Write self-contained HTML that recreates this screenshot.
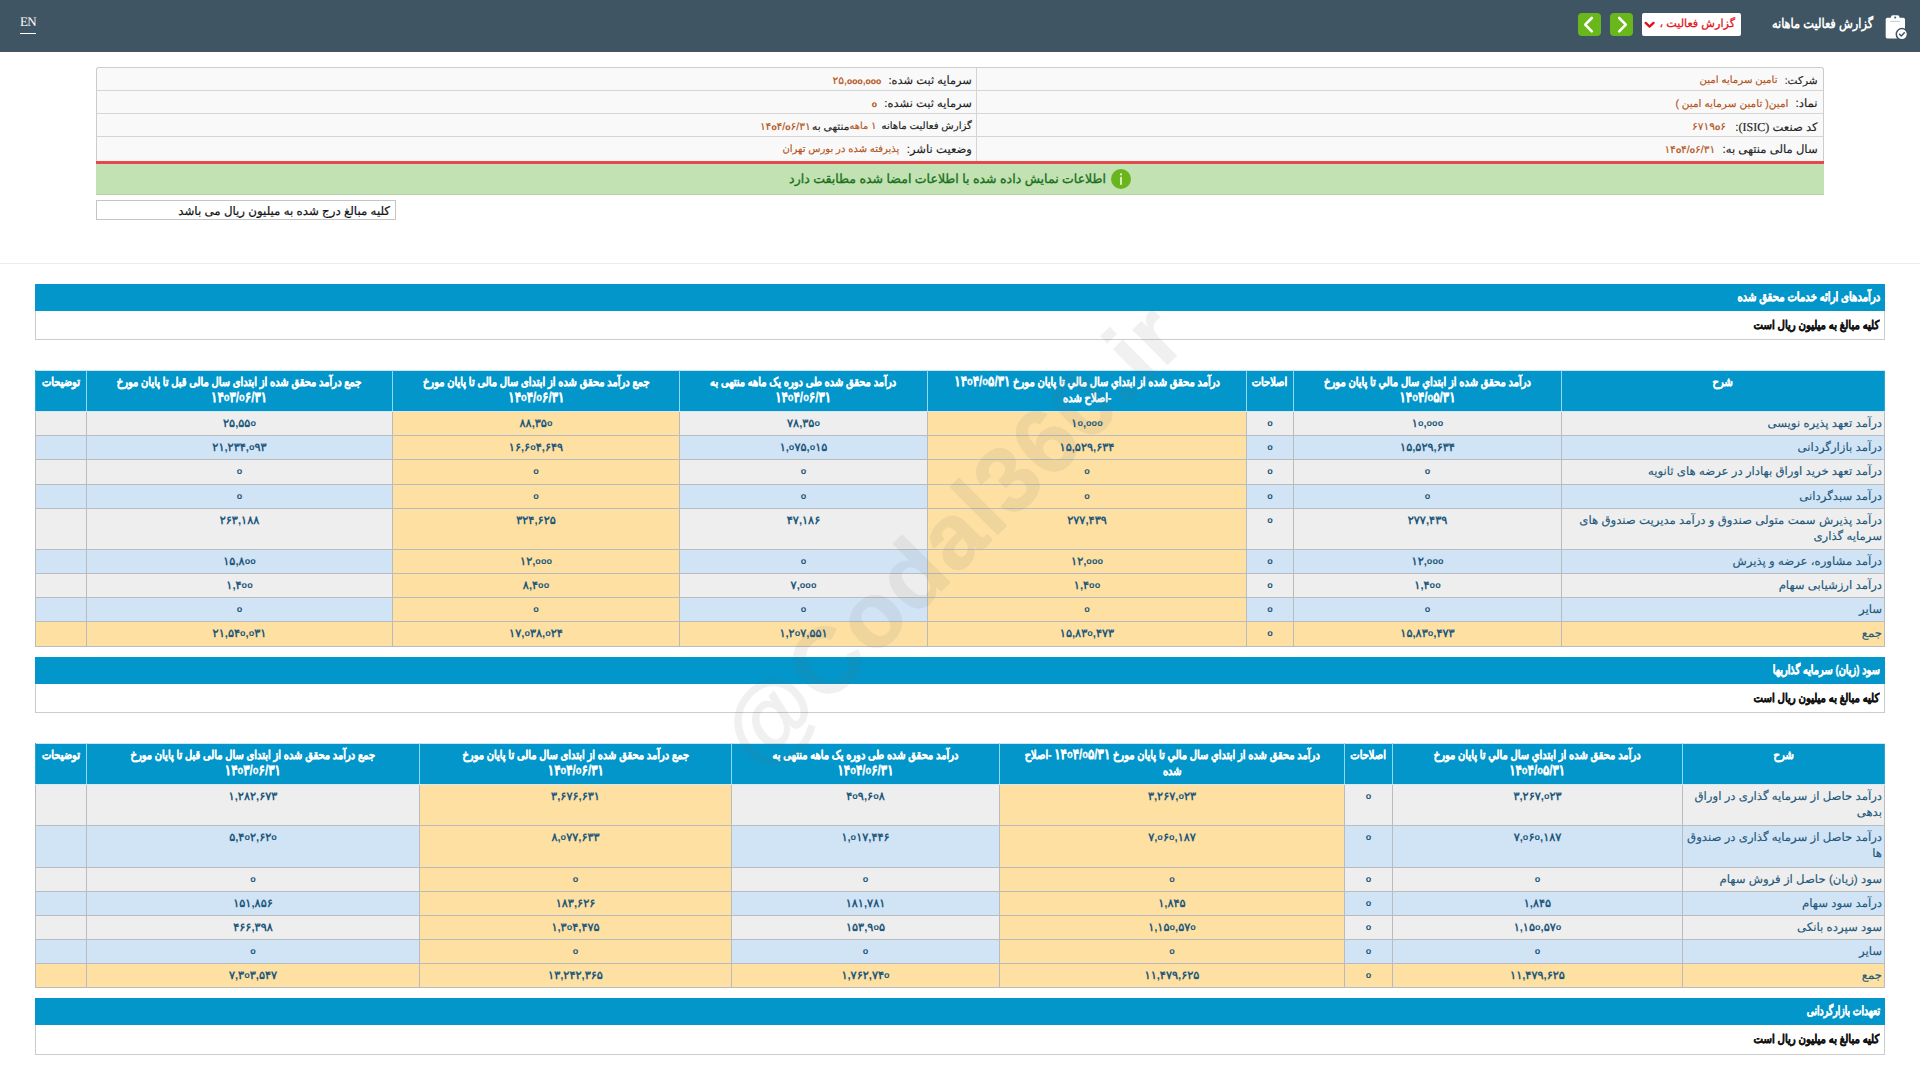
<!DOCTYPE html>
<html lang="fa" dir="rtl">
<head>
<meta charset="utf-8">
<title>گزارش فعالیت ماهانه</title>
<style>
*{box-sizing:border-box;margin:0;padding:0}
html,body{width:1920px;height:1080px;overflow:hidden;background:#fff}
body{font-family:"Liberation Sans",sans-serif;font-size:11px;color:#222;direction:rtl;position:relative;text-rendering:geometricPrecision}
.abs{position:absolute}
/* top bar */
#bar{left:0;top:0;width:1920px;height:52px;background:#3f5563}
#en{left:20px;top:14px;width:16px;height:20px;color:#fff;font-family:"Liberation Serif",serif;font-size:13px;letter-spacing:-0.6px;line-height:16px;border-bottom:1px solid #fff;direction:ltr;text-align:left;white-space:nowrap}
.gbtn{top:13px;width:23px;height:23px;border-radius:4px;background:#69b71b}
#sel{left:1642px;top:13px;width:99px;height:23px;border-radius:2px;background:#fff;color:#e3101a;-webkit-text-stroke:0.25px #e3101a;font-size:11.2px;line-height:22px;white-space:nowrap;text-align:right;padding-right:6px}
#title{left:1700px;width:173px;top:12px;height:24px;color:#fff;font-weight:bold;font-size:13.5px;line-height:24px;text-align:right;white-space:nowrap}
#title span{display:inline-block;transform:scaleX(0.843);transform-origin:100% 50%}
/* info box */
#info{left:96px;top:67px;width:1728px;height:94px;border:1px solid #ccc;border-bottom:none;border-radius:3px 3px 0 0;background:#f9f9f9}
.ir{position:absolute;left:0;width:1726px;height:1px;background:#d5d5d5}
#idiv{left:879px;top:0;width:1px;height:93px;background:#d5d5d5}
.it{position:absolute;height:22px;line-height:22px;font-size:11.3px;white-space:nowrap;text-align:right;color:#222;-webkit-text-stroke:0.15px}
.it b{font-weight:normal;color:#b4541a}
.it b .n{font-size:1.05em}
#red{left:96px;top:161px;width:1728px;height:3px;background:#e8484a}
#green{left:96px;top:164px;width:1728px;height:31px;background:#c2e2b4;border-bottom:1px solid #b5d5a8}
#gtxt{left:760px;width:346px;top:169px;height:20px;line-height:20px;font-size:12.5px;color:#1a701a;-webkit-text-stroke:0.35px #1a701a;text-align:right;white-space:nowrap}
#gico{left:1111px;top:169px;width:20px;height:20px;border-radius:50%;background:#6ab51e}
#note{left:96px;top:200px;width:300px;height:20px;border:1px solid #c4c4c4;background:#fff;font-size:11.8px;line-height:20px;-webkit-text-stroke:0.2px #111;color:#111;text-align:right;padding-right:5px;white-space:nowrap}
#hr{left:0;top:263px;width:1920px;height:1px;background:#ececec}
/* sections */
.sec{left:35px;width:1850px;height:27px;background:#0296cb;color:#fff;font-weight:bold;-webkit-text-stroke:0.3px #fff;font-size:12.5px;line-height:26px;text-align:right;padding-right:5px;white-space:nowrap}
.sec span,.sub span{display:inline-block;transform-origin:100% 50%}
.sub{left:35px;width:1850px;height:29px;background:#fff;border:1px solid #ccc;border-top:none;color:#111;font-weight:bold;-webkit-text-stroke:0.3px #111;font-size:12px;line-height:28px;text-align:right;padding-right:5px;white-space:nowrap}
.sub span{transform:scaleX(0.842)}
/* tables */
table.tb{position:absolute;border-collapse:collapse;table-layout:fixed;direction:rtl}
.tb th,.tb td{border:1px solid #b9bcbf;vertical-align:top;text-align:center;overflow:hidden}
.tb th{background:#0296cb;color:#fff;font-weight:bold;-webkit-text-stroke:0.25px #fff;font-size:12px;line-height:16px;padding:2.5px 0 0;border-color:#8edaf5;border-bottom-color:#d6e9f1;border-top-color:#cfe6f0;white-space:nowrap;overflow:visible}
.tb th:first-child{border-right-color:#2ba5d3}
.tb th:last-child{border-left-color:#2ba5d3}
.tb th>span{display:block;margin:0 -12%;transform:scaleX(0.825);transform-origin:50% 50%}
.tb th .n{font-size:1.19em;line-height:1}
.tb td{color:#1f587b;font-size:11.7px;line-height:16px;padding:3.5px 3px 0}
.tb td.d{text-align:right;padding-right:2px;white-space:nowrap;-webkit-text-stroke:0.15px #1f587b}
.tb tr.odd td{background:#eeeeee}
.tb tr.even td{background:#d1e4f6}
.tb tr td.y,.tb tr.sum td{background:#fde0a2}
.n{direction:ltr;unicode-bidi:isolate-override;display:inline-block;white-space:nowrap}
.n i{font-style:normal;font-family:"Liberation Sans",sans-serif;font-weight:bold;font-size:0.8em;position:relative;top:-0.05em}
.tb td .n{font-weight:bold;font-size:11.3px}
#wm{left:582px;top:475px;width:740px;height:120px;transform:rotate(-45deg);transform-origin:50% 50%;font-family:"Liberation Sans",sans-serif;font-weight:bold;font-size:93px;letter-spacing:1.3px;line-height:120px;color:#6e6e6e;-webkit-text-stroke:0.8px #6e6e6e;opacity:0.095;direction:ltr;text-align:center;white-space:nowrap;pointer-events:none}
</style>
</head>
<body>
<div id="bar" class="abs"></div>
<div id="en" class="abs">EN</div>
<div class="abs gbtn" style="left:1578px"><svg width="23" height="23" viewBox="0 0 23 23"><path d="M13.8 5 L7.2 11.7 L13.8 18.4" fill="none" stroke="#fff" stroke-width="2.6" stroke-linecap="round" stroke-linejoin="round"/></svg></div>
<div class="abs gbtn" style="left:1610px"><svg width="23" height="23" viewBox="0 0 23 23"><path d="M9.2 5 L15.8 11.7 L9.2 18.4" fill="none" stroke="#fff" stroke-width="2.6" stroke-linecap="round" stroke-linejoin="round"/></svg></div>
<div id="sel" class="abs"><span>گزارش فعالیت ،</span><svg class="abs" style="left:2px;top:7.5px" width="11" height="8" viewBox="0 0 11 8"><path d="M1.7 1.9 L5.6 5.6 L9.5 1.9" fill="none" stroke="#e3101a" stroke-width="2.3" stroke-linecap="round" stroke-linejoin="round"/></svg></div>
<div id="title" class="abs"><span>گزارش فعالیت ماهانه</span></div>
<svg class="abs" style="left:1884px;top:14px" width="26" height="28" viewBox="0 0 26 28">
<rect x="1.7" y="3.8" width="19.3" height="20.6" rx="1.6" fill="#fff"/>
<rect x="6.9" y="1.3" width="8.6" height="5.6" rx="2" fill="#fff"/>
<rect x="6.3" y="6.9" width="9.8" height="0.9" fill="#3f5563" opacity="0.35"/>
<circle cx="11.2" cy="3.4" r="1" fill="#3f5563"/>
<circle cx="17.9" cy="20.2" r="5.6" fill="#fff" stroke="#3f5563" stroke-width="1.5"/>
<path d="M15.6 20.3 l1.7 1.7 l3 -3.3" fill="none" stroke="#3f5563" stroke-width="1.5" stroke-linecap="round" stroke-linejoin="round"/>
</svg>

<div id="info" class="abs">
<div class="ir" style="top:22px"></div><div class="ir" style="top:45px"></div><div class="ir" style="top:68px"></div>
<div id="idiv" class="abs"></div>
<div class="it" style="right:5.4px;top:2px;font-size:10.54px">شرکت:</div>
<div class="it" style="right:45.5px;top:2px;font-size:10.20px"><b>تامین سرمایه امین</b></div>
<div class="it" style="right:5.4px;top:25px;font-size:11.70px">نماد:</div>
<div class="it" style="right:34.5px;top:25px;font-size:10.53px"><b>امین( تامین سرمایه امین )</b></div>
<div class="it" style="right:5.4px;top:48px;font-size:11.60px">کد صنعت <span style="font-family:'Liberation Serif',serif;font-size:12px">(ISIC)</span>:</div>
<div class="it" style="right:97.0px;top:48px;font-size:10.20px"><b><span class="n">۶۷۱۹<i>o</i>۶</span></b></div>
<div class="it" style="right:5.4px;top:71px;font-size:11.60px">سال مالی منتهی به:</div>
<div class="it" style="right:107.7px;top:71px;font-size:10.20px"><b><span class="n">۱۴<i>o</i>۴/<i>o</i>۶/۳۱</span></b></div>
<div class="it" style="right:851.1px;top:2px;font-size:11.40px">سرمایه ثبت شده:</div>
<div class="it" style="right:941.7px;top:2px;font-size:10.20px"><b><span class="n">۲۵,<i>o</i><i>o</i><i>o</i>,<i>o</i><i>o</i><i>o</i></span></b></div>
<div class="it" style="right:851.1px;top:25px;font-size:11.45px">سرمایه ثبت نشده:</div>
<div class="it" style="right:946.1px;top:25px;font-size:10.20px"><b><span class="n"><i>o</i></span></b></div>
<div class="it" style="right:851.1px;top:48px;font-size:10.17px">گزارش فعالیت ماهانه</div>
<div class="it" style="right:946.5px;top:48px;font-size:9.80px"><b><span class="n">۱</span> ماهه</b></div>
<div class="it" style="right:973.6px;top:48px;font-size:10.60px">منتهی به</div>
<div class="it" style="right:1012.2px;top:48px;font-size:10.20px"><b><span class="n">۱۴<i>o</i>۴/<i>o</i>۶/۳۱</span></b></div>
<div class="it" style="right:851.1px;top:71px;font-size:11.58px">وضعیت ناشر:</div>
<div class="it" style="right:923.6px;top:71px;font-size:10.03px"><b>پذیرفته شده در بورس تهران</b></div>
</div>
<div id="red" class="abs"></div>
<div id="green" class="abs"></div>
<div id="gtxt" class="abs">اطلاعات نمایش داده شده با اطلاعات امضا شده مطابقت دارد</div>
<div id="gico" class="abs"><svg width="20" height="20" viewBox="0 0 20 20"><circle cx="10" cy="5.3" r="1.15" fill="#e4f5c4"/><rect x="9.1" y="7.8" width="1.8" height="8.2" rx="0.8" fill="#e4f5c4"/></svg></div>
<div id="note" class="abs">کلیه مبالغ درج شده به میلیون ریال می باشد</div>
<div id="hr" class="abs"></div>

<div class="abs sec" style="top:284px"><span style="transform:scaleX(0.806)">درآمدهای ارائه خدمات محقق شده</span></div>
<div class="abs sub" style="top:311px"><span>کلیه مبالغ به میلیون ریال است</span></div>
<table class="tb" style="left:35px;top:370px;width:1850px">
<colgroup><col style="width:323px"><col style="width:268px"><col style="width:47px"><col style="width:319px"><col style="width:248px"><col style="width:287px"><col style="width:306px"><col style="width:51px"></colgroup>
<tr style="height:41px"><th><span>شرح</span></th><th><span>درآمد محقق شده از ابتداي سال مالي تا پايان مورخ<br><span class="n">۱۴<i>o</i>۴/<i>o</i>۵/۳۱</span></span></th><th><span>اصلاحات</span></th><th><span>درآمد محقق شده از ابتداي سال مالي تا پايان مورخ <span class="n">۱۴<i>o</i>۴/<i>o</i>۵/۳۱</span><br>-اصلاح شده</span></th><th><span>درآمد محقق شده طی دوره یک ماهه منتهی به<br><span class="n">۱۴<i>o</i>۴/<i>o</i>۶/۳۱</span></span></th><th><span>جمع درآمد محقق شده از ابتدای سال مالی تا پایان مورخ<br><span class="n">۱۴<i>o</i>۴/<i>o</i>۶/۳۱</span></span></th><th><span>جمع درآمد محقق شده از ابتدای سال مالی قبل تا پایان مورخ<br><span class="n">۱۴<i>o</i>۳/<i>o</i>۶/۳۱</span></span></th><th><span>توضیحات</span></th></tr>
<tr class="odd" style="height:24px"><td class="d">درآمد تعهد پذیره نویسی</td><td><span class="n">۱<i>o</i>,<i>o</i><i>o</i><i>o</i></span></td><td><span class="n"><i>o</i></span></td><td class="y"><span class="n">۱<i>o</i>,<i>o</i><i>o</i><i>o</i></span></td><td><span class="n">۷۸,۳۵<i>o</i></span></td><td class="y"><span class="n">۸۸,۳۵<i>o</i></span></td><td><span class="n">۲۵,۵۵<i>o</i></span></td><td></td></tr>
<tr class="even" style="height:24px"><td class="d">درآمد بازارگردانی</td><td><span class="n">۱۵,۵۲۹,۶۳۴</span></td><td><span class="n"><i>o</i></span></td><td class="y"><span class="n">۱۵,۵۲۹,۶۳۴</span></td><td><span class="n">۱,<i>o</i>۷۵,<i>o</i>۱۵</span></td><td class="y"><span class="n">۱۶,۶<i>o</i>۴,۶۴۹</span></td><td><span class="n">۲۱,۲۳۴,<i>o</i>۹۳</span></td><td></td></tr>
<tr class="odd" style="height:25px"><td class="d">درآمد تعهد خرید اوراق بهادار در عرضه های ثانویه</td><td><span class="n"><i>o</i></span></td><td><span class="n"><i>o</i></span></td><td class="y"><span class="n"><i>o</i></span></td><td><span class="n"><i>o</i></span></td><td class="y"><span class="n"><i>o</i></span></td><td><span class="n"><i>o</i></span></td><td></td></tr>
<tr class="even" style="height:24px"><td class="d">درآمد سبدگردانی</td><td><span class="n"><i>o</i></span></td><td><span class="n"><i>o</i></span></td><td class="y"><span class="n"><i>o</i></span></td><td><span class="n"><i>o</i></span></td><td class="y"><span class="n"><i>o</i></span></td><td><span class="n"><i>o</i></span></td><td></td></tr>
<tr class="odd" style="height:41px"><td class="d">درآمد پذیرش سمت متولی صندوق و درآمد مدیریت صندوق های<br>سرمایه گذاری</td><td><span class="n">۲۷۷,۴۳۹</span></td><td><span class="n"><i>o</i></span></td><td class="y"><span class="n">۲۷۷,۴۳۹</span></td><td><span class="n">۴۷,۱۸۶</span></td><td class="y"><span class="n">۳۲۴,۶۲۵</span></td><td><span class="n">۲۶۳,۱۸۸</span></td><td></td></tr>
<tr class="even" style="height:24px"><td class="d">درآمد مشاوره، عرضه و پذیرش</td><td><span class="n">۱۲,<i>o</i><i>o</i><i>o</i></span></td><td><span class="n"><i>o</i></span></td><td class="y"><span class="n">۱۲,<i>o</i><i>o</i><i>o</i></span></td><td><span class="n"><i>o</i></span></td><td class="y"><span class="n">۱۲,<i>o</i><i>o</i><i>o</i></span></td><td><span class="n">۱۵,۸<i>o</i><i>o</i></span></td><td></td></tr>
<tr class="odd" style="height:24px"><td class="d">درآمد ارزشیابی سهام</td><td><span class="n">۱,۴<i>o</i><i>o</i></span></td><td><span class="n"><i>o</i></span></td><td class="y"><span class="n">۱,۴<i>o</i><i>o</i></span></td><td><span class="n">۷,<i>o</i><i>o</i><i>o</i></span></td><td class="y"><span class="n">۸,۴<i>o</i><i>o</i></span></td><td><span class="n">۱,۴<i>o</i><i>o</i></span></td><td></td></tr>
<tr class="even" style="height:24px"><td class="d">سایر</td><td><span class="n"><i>o</i></span></td><td><span class="n"><i>o</i></span></td><td class="y"><span class="n"><i>o</i></span></td><td><span class="n"><i>o</i></span></td><td class="y"><span class="n"><i>o</i></span></td><td><span class="n"><i>o</i></span></td><td></td></tr>
<tr class="sum" style="height:25px"><td class="d">جمع</td><td><span class="n">۱۵,۸۳<i>o</i>,۴۷۳</span></td><td><span class="n"><i>o</i></span></td><td class="y"><span class="n">۱۵,۸۳<i>o</i>,۴۷۳</span></td><td><span class="n">۱,۲<i>o</i>۷,۵۵۱</span></td><td class="y"><span class="n">۱۷,<i>o</i>۳۸,<i>o</i>۲۴</span></td><td><span class="n">۲۱,۵۴<i>o</i>,<i>o</i>۳۱</span></td><td></td></tr>
</table>
<div class="abs sec" style="top:657px"><span style="transform:scaleX(0.783)">سود (زیان) سرمایه گذاریها</span></div>
<div class="abs sub" style="top:684px"><span>کلیه مبالغ به میلیون ریال است</span></div>
<table class="tb" style="left:35px;top:743px;width:1850px">
<colgroup><col style="width:202px"><col style="width:290px"><col style="width:48px"><col style="width:345px"><col style="width:268px"><col style="width:312px"><col style="width:333px"><col style="width:51px"></colgroup>
<tr style="height:41px"><th><span>شرح</span></th><th><span>درآمد محقق شده از ابتداي سال مالي تا پايان مورخ<br><span class="n">۱۴<i>o</i>۴/<i>o</i>۵/۳۱</span></span></th><th><span>اصلاحات</span></th><th><span>درآمد محقق شده از ابتداي سال مالي تا پايان مورخ <span class="n">۱۴<i>o</i>۴/<i>o</i>۵/۳۱</span> -اصلاح<br>شده</span></th><th><span>درآمد محقق شده طی دوره یک ماهه منتهی به<br><span class="n">۱۴<i>o</i>۴/<i>o</i>۶/۳۱</span></span></th><th><span>جمع درآمد محقق شده از ابتدای سال مالی تا پایان مورخ<br><span class="n">۱۴<i>o</i>۴/<i>o</i>۶/۳۱</span></span></th><th><span>جمع درآمد محقق شده از ابتدای سال مالی قبل تا پایان مورخ<br><span class="n">۱۴<i>o</i>۳/<i>o</i>۶/۳۱</span></span></th><th><span>توضیحات</span></th></tr>
<tr class="odd" style="height:41px"><td class="d">درآمد حاصل از سرمایه گذاری در اوراق<br>بدهی</td><td><span class="n">۳,۲۶۷,<i>o</i>۲۳</span></td><td><span class="n"><i>o</i></span></td><td class="y"><span class="n">۳,۲۶۷,<i>o</i>۲۳</span></td><td><span class="n">۴<i>o</i>۹,۶<i>o</i>۸</span></td><td class="y"><span class="n">۳,۶۷۶,۶۳۱</span></td><td><span class="n">۱,۲۸۲,۶۷۳</span></td><td></td></tr>
<tr class="even" style="height:42px"><td class="d">درآمد حاصل از سرمایه گذاری در صندوق<br>ها</td><td><span class="n">۷,<i>o</i>۶<i>o</i>,۱۸۷</span></td><td><span class="n"><i>o</i></span></td><td class="y"><span class="n">۷,<i>o</i>۶<i>o</i>,۱۸۷</span></td><td><span class="n">۱,<i>o</i>۱۷,۴۴۶</span></td><td class="y"><span class="n">۸,<i>o</i>۷۷,۶۳۳</span></td><td><span class="n">۵,۴<i>o</i>۲,۶۲<i>o</i></span></td><td></td></tr>
<tr class="odd" style="height:24px"><td class="d">سود (زیان) حاصل از فروش سهام</td><td><span class="n"><i>o</i></span></td><td><span class="n"><i>o</i></span></td><td class="y"><span class="n"><i>o</i></span></td><td><span class="n"><i>o</i></span></td><td class="y"><span class="n"><i>o</i></span></td><td><span class="n"><i>o</i></span></td><td></td></tr>
<tr class="even" style="height:24px"><td class="d">درآمد سود سهام</td><td><span class="n">۱,۸۴۵</span></td><td><span class="n"><i>o</i></span></td><td class="y"><span class="n">۱,۸۴۵</span></td><td><span class="n">۱۸۱,۷۸۱</span></td><td class="y"><span class="n">۱۸۳,۶۲۶</span></td><td><span class="n">۱۵۱,۸۵۶</span></td><td></td></tr>
<tr class="odd" style="height:24px"><td class="d">سود سپرده بانکی</td><td><span class="n">۱,۱۵<i>o</i>,۵۷<i>o</i></span></td><td><span class="n"><i>o</i></span></td><td class="y"><span class="n">۱,۱۵<i>o</i>,۵۷<i>o</i></span></td><td><span class="n">۱۵۳,۹<i>o</i>۵</span></td><td class="y"><span class="n">۱,۳<i>o</i>۴,۴۷۵</span></td><td><span class="n">۴۶۶,۳۹۸</span></td><td></td></tr>
<tr class="even" style="height:24px"><td class="d">سایر</td><td><span class="n"><i>o</i></span></td><td><span class="n"><i>o</i></span></td><td class="y"><span class="n"><i>o</i></span></td><td><span class="n"><i>o</i></span></td><td class="y"><span class="n"><i>o</i></span></td><td><span class="n"><i>o</i></span></td><td></td></tr>
<tr class="sum" style="height:24px"><td class="d">جمع</td><td><span class="n">۱۱,۴۷۹,۶۲۵</span></td><td><span class="n"><i>o</i></span></td><td class="y"><span class="n">۱۱,۴۷۹,۶۲۵</span></td><td><span class="n">۱,۷۶۲,۷۴<i>o</i></span></td><td class="y"><span class="n">۱۳,۲۴۲,۳۶۵</span></td><td><span class="n">۷,۳<i>o</i>۳,۵۴۷</span></td><td></td></tr>
</table>
<div class="abs sec" style="top:998px"><span style="transform:scaleX(0.741)">تعهدات بازارگردانی</span></div>
<div class="abs sub" style="top:1025px;height:30px"><span>کلیه مبالغ به میلیون ریال است</span></div>

<div id="wm" class="abs">@Codal360.ir</div>
</body>
</html>
